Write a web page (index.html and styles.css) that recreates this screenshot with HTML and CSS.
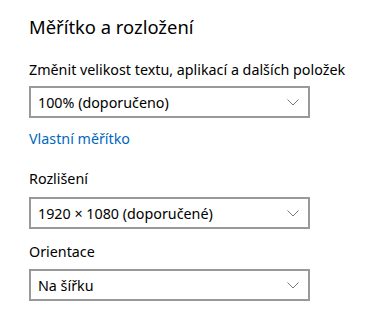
FILE: index.html
```html
<!DOCTYPE html>
<html lang="cs">
<head>
<meta charset="UTF-8">
<title>Měřítko a rozložení</title>
<link rel="stylesheet" href="styles.css">
</head>
<body>

   <div class="settings_page">

      <h1 class="section_title">Měřítko a rozložení</h1>

      <div class="field_label first_label">Změnit velikost textu, aplikací a dalších položek</div>
      <div class="combo_box">
         <span class="combo_text">100% (doporučeno)</span>
         <svg class="combo_chevron" width="12" height="7" viewBox="0 0 12 7">
            <polyline points="0.5,0.5 6,6 11.5,0.5" />
         </svg>
      </div>

      <a class="settings_link" href="#">Vlastní měřítko</a>

      <div class="field_label resolution_label">Rozlišení</div>
      <div class="combo_box">
         <span class="combo_text">1920 × 1080 (doporučené)</span>
         <svg class="combo_chevron" width="12" height="7" viewBox="0 0 12 7">
            <polyline points="0.5,0.5 6,6 11.5,0.5" />
         </svg>
      </div>

      <div class="field_label orientation_label">Orientace</div>
      <div class="combo_box orientation_box">
         <span class="combo_text">Na šířku</span>
         <svg class="combo_chevron" width="12" height="7" viewBox="0 0 12 7">
            <polyline points="0.5,0.5 6,6 11.5,0.5" />
         </svg>
      </div>

   </div> <!-- end of settings_page -->

</body>
</html>
```
FILE: styles.css
```css
body
{
   margin: 0 ;
   background-color: #ffffff ;
   color: #000000 ;
   font-family: "Noto Sans", "Open Sans", sans-serif ;
}

.settings_page
{
   display: flex ;
   flex-direction: column ;
   align-items: flex-start ;
   padding: 13px 0 0 29px ;
}

.section_title
{
   margin: 0 ;
   font-size: 18.4px ;
   font-weight: normal ;
   line-height: 28px ;
}

.field_label
{
   font-size: 14.3px ;
   line-height: 20px ;
}

.first_label       { margin-top: 19px ; }
.resolution_label  { margin-top: 20px ; }
.orientation_label { margin-top: 13px ; }

.combo_box
{
   box-sizing: border-box ;
   display: flex ;
   align-items: center ;
   justify-content: space-between ;
   width: 281px ;
   height: 32px ;
   margin-top: 6px ;
   padding: 0 9px 0 7px ;
   border: 2px solid #999999 ;
   font-size: 14.3px ;
}

.resolution_label + .combo_box { margin-top: 8px ; }
.orientation_box { margin-top: 7px ; }

.combo_chevron polyline
{
   fill: none ;
   stroke: #777777 ;
   stroke-width: 1 ;
}

.settings_link
{
   margin-top: 11px ;
   font-size: 14.3px ;
   line-height: 20px ;
   color: #0067c0 ;
   text-decoration: none ;
}
```
